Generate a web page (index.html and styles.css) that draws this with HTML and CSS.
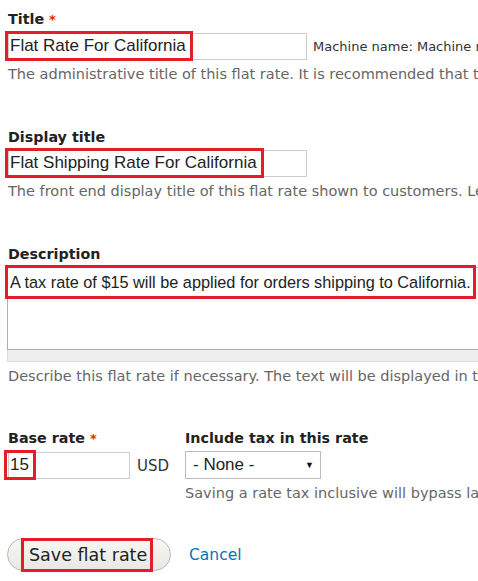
FILE: index.html
```html
<!DOCTYPE html>
<html lang="en">
<head>
<meta charset="utf-8">
<title>Flat rate</title>
<link rel="stylesheet" href="styles.css">
</head>
<body>
<form class="form">
  <div class="field f-title">
    <div class="label">Title <span class="req">*</span></div>
    <div class="row">
      <div class="input w-title"><span class="mark m-title">Flat Rate For California</span></div>
      <span class="machine">Machine name: Machine name</span>
    </div>
    <div class="desc">The administrative title of this flat rate. It is recommended that the title be unique.</div>
  </div>

  <div class="field f-display">
    <div class="label">Display title</div>
    <div class="row">
      <div class="input w-title"><span class="mark m-display">Flat Shipping Rate For California</span></div>
    </div>
    <div class="desc">The front end display title of this flat rate shown to customers. Leave blank to use the title.</div>
  </div>

  <div class="field f-descr">
    <div class="label">Description</div>
    <div class="textarea">
      <span class="mark m-descr">A tax rate of $15 will be applied for orders shipping to California.</span>
    </div>
    <div class="grip"></div>
    <div class="desc">Describe this flat rate if necessary. The text will be displayed in the checkout.</div>
  </div>

  <div class="pair">
    <div class="field f-base">
      <div class="label">Base rate <span class="req">*</span></div>
      <div class="row">
        <div class="input w-base"><span class="mark m-base">15</span></div>
        <span class="unit">USD</span>
      </div>
    </div>
    <div class="field f-tax">
      <div class="label">Include tax in this rate</div>
      <div class="select"><span>- None -</span><span class="arrow">&#9660;</span></div>
      <div class="desc">Saving a rate tax inclusive will bypass later calculations.</div>
    </div>
  </div>

  <div class="actions">
    <button type="button" class="btn"><span class="mark m-btn">Save flat rate</span></button>
    <a class="cancel" href="#">Cancel</a>
  </div>
</form>
</body>
</html>
```

FILE: styles.css
```css
html, body {
  margin: 0;
  padding: 0;
  background: #fff;
  overflow: hidden;
}
body {
  font-family: "DejaVu Sans", Verdana, sans-serif;
  color: #333;
  width: 478px;
  height: 581px;
}
.form {
  padding: 10px 0 0 8px;
  width: 900px;
}
.label {
  font-size: 14.3px;
  font-weight: bold;
  line-height: 18px;
  color: #222;
  margin-bottom: 4px;
  white-space: nowrap;
}
.req {
  color: #e62600;
  font-size: 13px;
}
.row {
  display: flex;
  align-items: center;
}
.input {
  display: flex;
  align-items: stretch;
  height: 27px;
  box-sizing: border-box;
  border: 1px solid #ccc;
  background: #fff;
  font-family: "Liberation Sans", Arial, sans-serif;
  font-size: 17px;
  color: #333;
}
.w-title { width: 299px; }
.w-base { width: 122px; }
.mark {
  display: inline-flex;
  align-items: center;
  border: 3px solid #e31e2a;
  white-space: nowrap;
  padding: 0 4px 0 2px;
  color: #222;
}
.m-title, .m-display {
  margin: -3px 0 -2px -4px;
}
.m-base {
  margin: -3px 0 -2px -5px;
  padding: 0 4px 0 3px;
}
.machine {
  margin-left: 6px;
  font-size: 13px;
  color: #333;
  white-space: nowrap;
}
.desc {
  margin-top: 5px;
  font-size: 14.5px;
  line-height: 18px;
  color: #666;
  white-space: nowrap;
}
.field { margin-bottom: 45px; }
.f-descr { margin-bottom: 44px; }
.textarea {
  box-sizing: border-box;
  margin-left: -1px;
  height: 83px;
  width: 700px;
  border: 1px solid #8fb3e6;
  padding: 0;
  font-family: "Liberation Sans", Arial, sans-serif;
  font-size: 16.3px;
}
.m-descr {
  height: 34px;
  box-sizing: border-box;
  width: 471px;
  margin: -3px 0 0 -3px;
  padding: 0 4px 0 2px;
}
.grip {
  margin-left: -1px;
  width: 700px;
  height: 12px;
  box-sizing: border-box;
  background: #eee;
  border: 1px solid #ddd;
  border-top: none;
}
.pair {
  display: flex;
}
.pair .field { margin-bottom: 0; }
.f-base { width: 177px; }
.unit {
  margin-left: 7px;
  font-size: 15px;
  color: #333;
}
.select {
  display: flex;
  align-items: center;
  justify-content: space-between;
  box-sizing: border-box;
  width: 136px;
  height: 28px;
  border: 1px solid #bbb;
  padding: 0 6px 0 7px;
  font-family: "Liberation Sans", Arial, sans-serif;
  font-size: 17px;
  color: #222;
}
.arrow {
  font-size: 9px;
  color: #111;
}
.actions {
  display: flex;
  align-items: center;
  margin-top: 36px;
  margin-left: -1px;
}
.btn {
  display: flex;
  align-items: center;
  justify-content: flex-start;
  box-sizing: border-box;
  width: 164px;
  height: 33px;
  padding: 0 0 0 13px;
  border: 1px solid #b8b8b8;
  border-radius: 17px;
  background: linear-gradient(#f7f7f5, #e7e7e4);
  font-family: "DejaVu Sans", Verdana, sans-serif;
  font-size: 17.5px;
  color: #333;
}
.m-btn {
  height: 34px;
  box-sizing: border-box;
  padding: 0 3px 0 5px;
}
.cancel {
  margin-left: 18px;
  font-size: 15.5px;
  color: #0074bd;
  text-decoration: none;
}
```
